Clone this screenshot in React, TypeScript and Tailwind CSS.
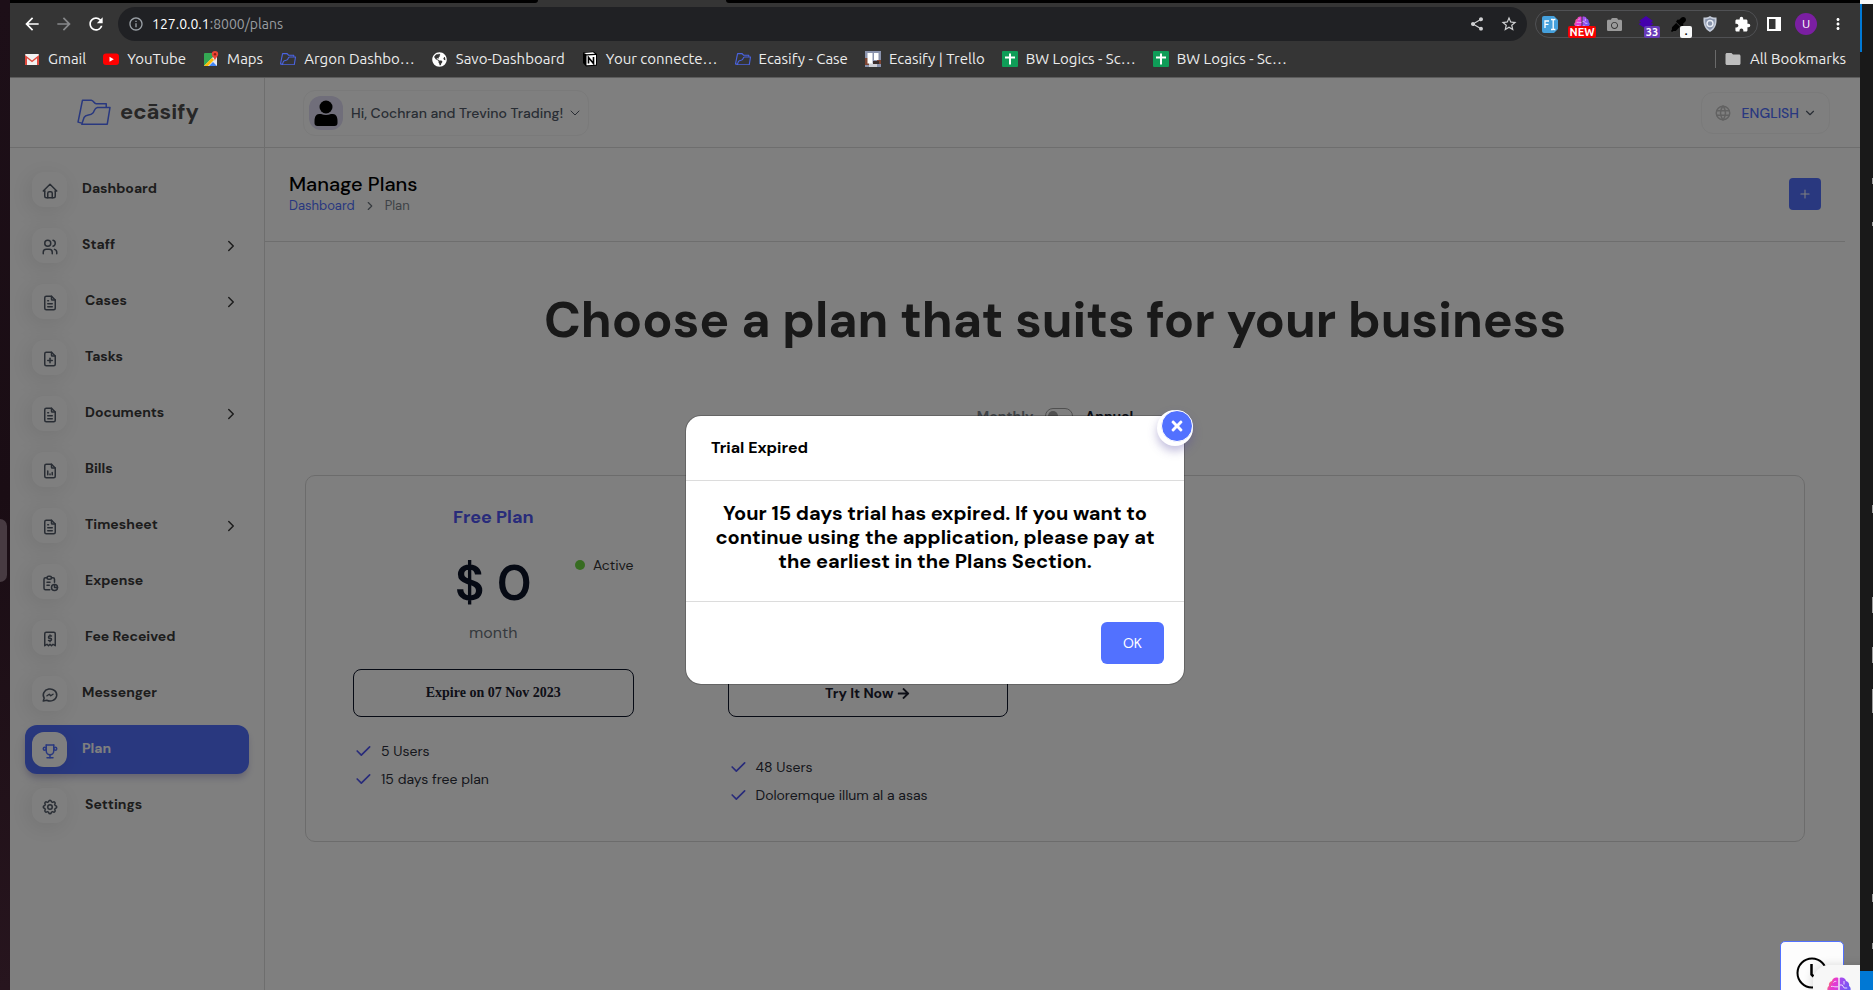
import type { ReactNode } from 'react'
import {
  TbHome,
  TbUsers,
  TbFileText,
  TbFilePlus,
  TbFileAnalytics,
  TbReport,
  TbReceipt2,
  TbBrandMessenger,
  TbTrophy,
  TbSettings,
  TbCheck,
  TbChevronRight,
  TbChevronDown,
  TbPlus,
  TbWorld,
} from 'react-icons/tb'
import {
  MdArrowBack,
  MdArrowForward,
  MdRefresh,
  MdInfoOutline,
  MdShare,
  MdStarBorder,
  MdExtension,
  MdMoreVert,
  MdFolder,
} from 'react-icons/md'
import { FaArrowRight, FaCamera, FaEyeDropper, FaTimes, FaGlobeAmericas } from 'react-icons/fa'

const uiFont = "font-['DM_Sans','Inter',sans-serif]"
const chromeFont = "font-['Ubuntu','Noto_Sans',sans-serif]"

function FolderLogo({ className, stroke = 4.5 }: { className: string; stroke?: number }) {
  return (
    <svg viewBox="0 0 100 78" className={className} fill="none" stroke="currentColor" strokeWidth={stroke} strokeLinejoin="round">
      <path d="M14 71 L3 68 L16 4 H42 C50 5 50 14 56 14 H86 V24" />
      <path d="M14 74 H89 L97 25 H60 C50 27 52 36 46 42 C38 50 26 44 21 54 Z" />
    </svg>
  )
}

function BrainIcon({ className }: { className: string }) {
  return (
    <svg viewBox="0 0 24 24" className={className}>
      <path
        d="M11.300 1v22C8.500 24 6.500 22.500 6 20.500 3 20.500 1.500 18 2.300 15.500-.3 13.800-.2 10.500 2 9 1.300 6.500 3 4.300 5 4 5.500 1.300 8.500-.2 11.300 1z"
        fill="url(#brain-left)"
      />
      <path
        d="M12.700 1v22c2.800 1 4.800-.5 5.300-2.500 3 0 4.500-2.500 3.700-5 2.600-1.700 2.500-5 .3-6.500.7-2.500-1-4.700-3-5C18.500 1.300 15.500-.2 12.700 1z"
        fill="url(#brain-right)"
      />
      <path
        d="M4 9.500c2-.5 3 .3 4 .3h3.300M6.500 5.500c.5-1 1.800-1.200 2.800-1.200M4 14.500h4M12.700 8h2.500l2 3h3M17 4v3.500M12.700 15h4l2 2.500"
        stroke="#f4ecff"
        strokeWidth="0.900"
        fill="none"
      />
    </svg>
  )
}

function GmailIcon() {
  return (
    <svg viewBox="0 0 16 16" className="size-4">
      <rect x="1" y="3" width="14" height="11" rx="1" fill="#f2f2f2" />
      <path d="M1 14V4l7 5.6L15 4v10h-2V7.2l-5 4-5-4V14z" fill="#e04a3f" />
    </svg>
  )
}

function YouTubeIcon() {
  return (
    <svg viewBox="0 0 16 16" className="size-4">
      <rect x="0" y="2.500" width="16" height="11.500" rx="3" fill="#f00" />
      <path d="M6.500 5.800v5L10.800 8.300z" fill="#fff" />
    </svg>
  )
}

function MapsIcon() {
  return (
    <svg viewBox="0 0 16 16" className="size-4">
      <rect x="1" y="2" width="13" height="13" rx="1" fill="#34a853" />
      <path d="M1 15 12 4l2 2v9z" fill="#e9ebee" />
      <path d="M1 15 9 7l2 2-6 6z" fill="#fbbc04" />
      <path d="M6 15l4-4 4 4z" fill="#4285f4" />
      <path d="M12 0a3.2 3.2 0 0 1 3.2 3.2C15.200 5.500 12.600 6.500 12 10c-.6-3.500-3.200-4.500-3.200-6.800A3.200 3.200 0 0 1 12 0z" fill="#ea4335" />
      <circle cx="12" cy="3.200" r="1.200" fill="#8c1d14" />
    </svg>
  )
}

function NotionIcon() {
  return (
    <svg viewBox="0 0 16 16" className="size-4">
      <path d="M1 1.500 11.500.5 15 3v11.500L4 15.500 1 12z" fill="#000" />
      <path d="M2 2 11 1.200l2 1.500-8.500.6z" fill="#fff" />
      <path d="M4.500 4.500 14 3.900v9.800l-9.500.6z" fill="#fff" />
      <path d="M6.500 12.500V6.500l5 6v-6.500" stroke="#000" strokeWidth="1.600" fill="none" />
    </svg>
  )
}

function TrelloIcon() {
  return (
    <svg viewBox="0 0 16 16" className="size-4">
      <rect width="16" height="16" fill="#8a93ad" />
      <path d="M0 7h4v7H0zM12 9h4v4h-4z" fill="#7d4433" />
      <path d="M4 12h8v4H4z" fill="#cfd0d6" />
      <rect x="2.500" y="2" width="5" height="10.500" fill="#fff" />
      <rect x="9" y="2" width="4.500" height="7" fill="#fff" />
      <path d="M8 10h6v3H8z" fill="#3a2d2d" />
    </svg>
  )
}

function SheetIcon() {
  return (
    <svg viewBox="0 0 16 16" className="size-4">
      <rect width="16" height="16" rx="1" fill="#0f9d58" />
      <path d="M8 2.500v11M3 6.500h10" stroke="#fff" strokeWidth="2" />
    </svg>
  )
}

const bookmarks: { label: string; icon: ReactNode }[] = [
  { label: 'Gmail', icon: <GmailIcon /> },
  { label: 'YouTube', icon: <YouTubeIcon /> },
  { label: 'Maps', icon: <MapsIcon /> },
  { label: 'Argon Dashbo…', icon: <FolderLogo stroke={7} className="w-4 text-[#4a63e0]" /> },
  { label: 'Savo-Dashboard', icon: <FaGlobeAmericas className="size-[15px] text-white" /> },
  { label: 'Your connecte…', icon: <NotionIcon /> },
  { label: 'Ecasify - Case', icon: <FolderLogo stroke={7} className="w-4 text-[#4a63e0]" /> },
  { label: 'Ecasify | Trello', icon: <TrelloIcon /> },
  { label: 'BW Logics - Sc…', icon: <SheetIcon /> },
  { label: 'BW Logics - Sc…', icon: <SheetIcon /> },
]

function Badge({ className, children }: { className: string; children: ReactNode }) {
  return (
    <span className={`absolute -bottom-1.5 flex h-3 items-center justify-center rounded-[2px] text-[11px] font-bold leading-none ${className}`}>
      {children}
    </span>
  )
}

function Extensions() {
  return (
    <div className="flex h-7 items-center rounded-full border border-[#505154]">
      <button aria-label="Font finder" className="flex w-7 justify-center">
        <svg viewBox="0 0 16 17" className="h-[17px] w-4">
          <path d="M2 0h10l4 4v9l-4 4H2a2 2 0 0 1-2-2V2a2 2 0 0 1 2-2z" fill="#45a0dc" />
          <path d="M3 12V5h4M3 8.300h3.500M9 3.500h1.500l.7.700.7-.7h1.500M9 13.500h1.500l.7-.7.7.7h1.500M11.200 4.200v8.600" stroke="#fff" strokeWidth="1.300" fill="none" />
        </svg>
      </button>
      <button aria-label="Brain" className="relative ml-1 flex w-7 justify-center">
        <BrainIcon className="size-4" />
        <Badge className="w-7 bg-[#f40000] text-white">NEW</Badge>
      </button>
      <button aria-label="Screenshot" className="ml-1 flex w-7 justify-center">
        <FaCamera className="size-[15px] text-[#9a9a9a]" />
      </button>
      <button aria-label="Stack" className="relative ml-1 flex w-7 justify-center">
        <svg viewBox="0 0 16 16" className="size-4">
          <path d="M8 0l7 5-2 1.500L15.500 8 8 13 .5 8 3 6.500 1 5z" fill="#4400ac" />
        </svg>
        <Badge className="right-0 w-4 bg-[#673ab7] text-white">33</Badge>
      </button>
      <button aria-label="Colour picker" className="relative ml-1 flex w-7 justify-center">
        <FaEyeDropper className="size-[15px] text-black" />
        <Badge className="right-0 w-3 bg-[#f8f9fa] text-black">.</Badge>
      </button>
      <button aria-label="Shield" className="ml-1 flex w-7 justify-center">
        <svg viewBox="0 0 14 16" className="h-4 w-[14px]">
          <path d="M7 0c2 1.300 4.500 1.800 6.500 1.500C14 8 12.500 13 7 16 1.500 13 0 8 .5 1.500 2.500 1.800 5 1.300 7 0z" fill="#c3cad8" />
          <path d="M7 2c1.500.8 3.200 1.200 4.800 1.200C12 8 10.800 11.700 7 14 3.200 11.700 2 8 2.200 3.200 3.800 3.200 5.500 2.800 7 2z" fill="#8793ab" />
          <circle cx="7" cy="7.500" r="3" fill="none" stroke="#e7ebf3" strokeWidth="1.500" />
        </svg>
      </button>
      <button aria-label="Extensions" className="ml-1 mr-px flex w-7 justify-center">
        <MdExtension className="size-[17px] text-white" />
      </button>
    </div>
  )
}

function BrowserChrome() {
  return (
    <header className={`shrink-0 border-b border-[#5c5c5c] bg-[#353535] ${chromeFont}`}>
      <div className="flex h-[3px] bg-[#353535]">
        <div className="w-[528px] rounded-br-sm bg-black" />
        <div className="w-[188px]" />
        <div className="flex-1 rounded-bl-sm bg-black" />
      </div>
      <div className="flex h-[42px] items-center px-1.5">
        <button aria-label="Back" className="flex w-8 justify-center text-white">
          <MdArrowBack className="size-5" />
        </button>
        <button aria-label="Forward" className="flex w-8 justify-center text-[#87888a]">
          <MdArrowForward className="size-5" />
        </button>
        <button aria-label="Reload" className="flex w-8 justify-center text-white">
          <MdRefresh className="size-5" />
        </button>
        <div className="ml-1.5 flex h-[34px] flex-1 items-center rounded-full bg-[#202124] pl-2.5 pr-0.5">
          <MdInfoOutline className="size-4 text-[#9aa0a6]" />
          <a href="#" className="ml-2 flex-1 text-sm text-[#9a9da1]">
            <span className="text-white">127.0.0.1</span>:8000/plans
          </a>
          <button aria-label="Share" className="flex w-8 justify-center text-[#cfd0d2]">
            <MdShare className="size-4" />
          </button>
          <button aria-label="Bookmark" className="flex w-8 justify-center text-[#cfd0d2]">
            <MdStarBorder className="size-[18px]" />
          </button>
        </div>
        <div className="ml-2">
          <Extensions />
        </div>
        <button aria-label="Side panel" className="flex w-8 justify-center">
          <svg viewBox="0 0 14 14" className="size-[14px]">
            <path d="M0 0h14v14H0zM2 2v10h6.500V2z" fill="#fff" fillRule="evenodd" />
          </svg>
        </button>
        <button aria-label="Profile" className="mx-[5px] flex size-[22px] items-center justify-center rounded-full bg-[#7b1fa2] text-xs text-white">
          U
        </button>
        <button aria-label="Menu" className="flex w-8 justify-center text-white">
          <MdMoreVert className="size-[18px]" />
        </button>
      </div>
      <nav className="flex h-8 items-center gap-px pb-1 pl-1.5 pr-3.5 text-[15px] leading-5 text-[#ececec]">
        {bookmarks.map((b, i) => (
          <a key={i} href="#" className="flex items-center gap-2 whitespace-nowrap px-2">
            <span className="flex w-4 justify-center">{b.icon}</span>
            {b.label}
          </a>
        ))}
        <a href="#" className="ml-auto flex items-center gap-2 border-l border-[#6a6a6a] pl-2 leading-4">
          <MdFolder className="size-[18px] text-[#bdbdbd]" />
          All Bookmarks
        </a>
      </nav>
    </header>
  )
}

const menu = [
  { label: 'Dashboard', Icon: TbHome },
  { label: 'Staff', Icon: TbUsers, more: true },
  { label: 'Cases', Icon: TbFileText, more: true, inset: true },
  { label: 'Tasks', Icon: TbFilePlus, inset: true },
  { label: 'Documents', Icon: TbFileText, more: true, inset: true },
  { label: 'Bills', Icon: TbFileAnalytics, inset: true },
  { label: 'Timesheet', Icon: TbFileText, more: true, inset: true },
  { label: 'Expense', Icon: TbReport, inset: true },
  { label: 'Fee Received', Icon: TbReceipt2, inset: true },
  { label: 'Messenger', Icon: TbBrandMessenger },
  { label: 'Plan', Icon: TbTrophy, active: true },
  { label: 'Settings', Icon: TbSettings, inset: true },
]

function Sidebar() {
  return (
    <aside className="flex w-[255px] shrink-0 flex-col border-r border-[#dcdcdc]">
      <a href="#" className="flex h-[70px] items-center border-b border-[#dcdcdc] pl-[67px] text-[#4e4e4e]">
        <FolderLogo className="w-[34px] text-[#5271ff]" />
        <span className="ml-[9px] pb-0.5 text-[22px] font-bold leading-7">ecāsify</span>
      </a>
      <nav className="flex flex-col gap-[7px] px-[15px] pt-[17px]">
        {menu.map(({ label, Icon, more, inset, active }) => (
          <a
            key={label}
            href="#"
            className={`flex h-[49px] items-center rounded-xl px-[7px] text-sm font-bold ${
              active ? 'bg-[#5271ff] text-white shadow-[0_5px_7px_-1px_rgba(81,69,157,0.3)]' : 'text-[#3a3a3a]'
            }`}
          >
            <span className="flex size-[35px] items-center justify-center rounded-xl bg-white pt-0.5 shadow-[-3px_4px_23px_rgba(0,0,0,0.1)]">
              <Icon className={active ? 'size-[18px] text-[#5271ff]' : 'size-[18px] text-[#525b69]'} />
            </span>
            <span className={inset ? 'ml-[18px] pb-[3px]' : 'ml-[15px] pb-[3px]'}>{label}</span>
            {more && <TbChevronRight className="ml-auto mr-0.5 size-[18px]" />}
          </a>
        ))}
      </nav>
    </aside>
  )
}

function Plan({
  name,
  price,
  period,
  status,
  featuresClass,
  button,
  features,
}: {
  name?: string
  price?: string
  period?: string
  status?: string
  featuresClass: string
  button: ReactNode
  features: string[]
}) {
  return (
    <section className="flex flex-col px-[47px]">
      <h2 className="min-h-6 text-center text-lg font-bold leading-6 text-[#5056f5]">{name}</h2>
      <div className="mt-6 grid min-h-[60px] grid-cols-[1fr_auto_1fr]">
        {price && (
          <span className="col-start-2 text-[50px] font-semibold leading-[60px] text-[#0d1428]">{price}</span>
        )}
        {status && (
          <span className="flex h-6 items-center gap-2 justify-self-end text-sm text-[#333]">
            <span className="size-2.5 rounded-full bg-[#6fd943]" />
            {status}
          </span>
        )}
      </div>
      <p className="mt-2 min-h-6 text-center text-base leading-6 text-[#6c757d]">{period}</p>
      {button}
      <ul className={`text-sm leading-7 text-[#2c2f3a] ${featuresClass}`}>
        {features.map((f) => (
          <li key={f} className="flex items-center gap-2">
            <TbCheck className="size-5 text-[#5056f5]" />
            {f}
          </li>
        ))}
      </ul>
    </section>
  )
}

const planButton =
  'mt-6 flex h-12 items-center justify-center gap-1 rounded-lg border border-[#0d1428] text-sm font-bold text-[#1c2130]'

function PlansPage() {
  return (
    <div className="flex min-w-0 flex-1 flex-col">
      <div className="flex h-[70px] items-center justify-between border-b border-[#dcdcdc] pl-[38px] pr-[30px]">
        <button className="flex h-[46px] items-center gap-2 rounded-xl border border-[#f4f4f4] px-[5px] text-sm font-medium text-[#525b69]">
          <span className="flex h-[34px] w-[34px] items-center justify-center rounded-xl bg-[#e0dcf4]">
            <svg viewBox="0 0 24 28" className="h-7 w-6">
              <path d="M5 15h14c3 0 4.500 3 4.500 7v2c0 2-1 3-3 3h-17c-2 0-3-1-3-3v-2c0-4 1.500-7 4.500-7z" />
              <ellipse cx="12" cy="13.500" rx="6" ry="2.500" fill="#e0dcf4" />
              <circle cx="12" cy="8" r="6.500" />
            </svg>
          </span>
          <span className="flex items-center gap-1">
            Hi, Cochran and Trevino Trading!
            <TbChevronDown className="size-4" strokeWidth={1.5} />
          </span>
        </button>
        <button className="flex h-[42px] items-center rounded-xl border border-[#f4f4f4] px-3 text-sm font-medium text-[#5271ff]">
          <TbWorld className="size-[18px] text-[#c4c4c4]" />
          <span className="ml-2.5">ENGLISH</span>
          <TbChevronDown className="ml-1 size-[14px] text-[#525b69]" />
        </button>
      </div>

      <main className="mr-[15px]">
        <div className="flex h-[94px] items-center justify-between border-b border-[#dcdcdc] px-6 pb-0.5">
          <div>
            <h1 className="text-xl font-medium leading-6 text-black">Manage Plans</h1>
            <nav className="flex items-center text-[13px] leading-5">
              <a href="#" className="text-[#5271ff]">
                Dashboard
              </a>
              <TbChevronRight className="mx-2 size-[14px] text-[#6c757d]" />
              <span className="text-[#7c858d]">Plan</span>
            </nav>
          </div>
          <button aria-label="Create plan" className="flex h-8 w-8 items-center justify-center rounded bg-[#5271ff] text-white">
            <TbPlus className="size-3.5" strokeWidth={1.8} />
          </button>
        </div>

        <h2 className="mt-12 text-center text-[50px] font-bold leading-[60px] text-[#333]">
          Choose a plan that suits for your business
        </h2>

        <label className="mt-[54px] flex h-6 items-center justify-center gap-3 text-sm font-bold">
          <span className="text-[#7c858d]">Monthly</span>
          <input
            type="checkbox"
            className="h-4 w-7 appearance-none rounded-full border border-[#a0a0a0] p-0.5 before:block before:size-2.5 before:rounded-full before:bg-[#a0a0a0]"
          />
          <span className="text-[#12182a]">Annual</span>
        </label>

        <div className="mx-10 mt-[47px] grid grid-cols-4 rounded-[10px] border border-[#d8d8d8] pb-8 pt-[29px]">
          <Plan
            name="Free Plan"
            price="$ 0"
            period="month"
            status="Active"
            featuresClass="mt-5"
            button={
              <button className={`${planButton} font-['Liberation_Serif',serif]`}>Expire on 07 Nov 2023</button>
            }
            features={['5 Users', '15 days free plan']}
          />
          <Plan
            featuresClass="mt-9"
            button={
              <button className={planButton}>
                Try It Now <FaArrowRight className="size-[13px]" />
              </button>
            }
            features={['48 Users', 'Doloremque illum al a asas']}
          />
        </div>
      </main>
    </div>
  )
}

function TrialDialog() {
  return (
    <div className="absolute inset-0 flex items-center justify-center bg-black/50 pt-8">
      <div
        role="dialog"
        aria-labelledby="trial-title"
        className="relative w-[500px] rounded-2xl border border-black/20 bg-white bg-clip-padding text-black"
      >
        <div className="flex h-[65px] items-center border-b border-[#dcdcdc] px-[25px]">
          <h3 id="trial-title" className="text-base font-bold">
            Trial Expired
          </h3>
        </div>
        <p className="border-b border-[#dcdcdc] px-[25px] pb-7 pt-5 text-center text-xl font-bold leading-6">
          Your 15 days trial has expired. If you want to continue using the application, please pay at the earliest in
          the Plans Section.
        </p>
        <div className="flex justify-end p-5">
          <button className="h-[42px] w-[63px] rounded-md bg-[#5271ff] text-sm text-white">OK</button>
        </div>
        <button
          aria-label="Close"
          className="absolute -right-[9px] -top-1.5 flex size-9 items-start justify-end rounded-full bg-white shadow-[0_5px_10px_rgba(81,69,157,0.35)]"
        >
          <span className="flex size-8 items-center justify-center rounded-full border border-white bg-[#5271ff] text-white">
            <FaTimes className="size-4" />
          </span>
        </button>
      </div>
    </div>
  )
}

function FloatingWidgets() {
  return (
    <div className="absolute bottom-0 right-0 h-[49px] w-20 overflow-hidden">
      <button
        aria-label="Time tracker"
        className="flex h-16 w-16 items-center justify-center rounded-[5px] border border-[#5271ff] bg-[#fdfdfd] text-black"
      >
        <svg viewBox="0 0 32 32" className="size-8" fill="none" stroke="currentColor">
          <circle cx="16" cy="16" r="14.500" strokeWidth="2" />
          <path d="M15.500 7v10.500l2 2" strokeWidth="2.500" />
        </svg>
      </button>
      <button
        aria-label="Assistant"
        className="absolute left-[33px] top-6 flex h-12 w-14 rounded-tl-2xl bg-[#f7f7f7] pl-3.5 pt-3 shadow-[-2px_-1px_8px_rgba(0,0,0,0.12)]"
      >
        <BrainIcon className="size-6" />
      </button>
    </div>
  )
}

const editorMarks = [
  'top-[178px] h-1.5',
  'top-[222px] h-1',
  'top-[505px] h-2',
  'top-[597px] h-4',
  'top-[647px] h-4',
  'top-[689px] h-6',
  'top-[894px] h-2',
  'top-[943px] h-1.5',
]

export default function App() {
  return (
    <div className={`flex h-screen overflow-hidden ${uiFont}`}>
      <svg className="absolute size-0" aria-hidden="true">
        <defs>
          <linearGradient id="brain-left" x1="0" y1="0" x2="1" y2="1">
            <stop offset="0" stopColor="#ff9d2e" />
            <stop offset="0.400" stopColor="#e838d0" />
            <stop offset="1" stopColor="#c044e8" />
          </linearGradient>
          <linearGradient id="brain-right" x1="0" y1="0" x2="1" y2="1">
            <stop offset="0" stopColor="#b048ee" />
            <stop offset="1" stopColor="#4f62f5" />
          </linearGradient>
        </defs>
      </svg>

      <div className="relative w-2.5 shrink-0 bg-linear-to-b from-[#1d0f18] via-[#1a0d14] to-[#27151e]">
        <div className="absolute left-0 top-[519px] h-[63px] w-[7px] rounded-r-lg bg-[#483b42]" />
      </div>

      <div className="flex min-w-0 flex-1 flex-col">
        <BrowserChrome />
        <div className="relative flex min-h-0 flex-1 overflow-hidden bg-white">
          <Sidebar />
          <PlansPage />
          <TrialDialog />
          <FloatingWidgets />
        </div>
      </div>

      <div className="relative flex w-[13px] shrink-0 flex-col bg-[#191919]">
        <div className="h-1 bg-[#f8f8f8]" />
        <div className="h-12 w-0.5 bg-[#0078d4]" />
        <div className="mt-auto h-[19px] bg-[#0078d4]" />
        {editorMarks.map((m) => (
          <div key={m} className={`absolute right-0 w-px bg-[#9a9a9a] ${m}`} />
        ))}
      </div>
    </div>
  )
}
